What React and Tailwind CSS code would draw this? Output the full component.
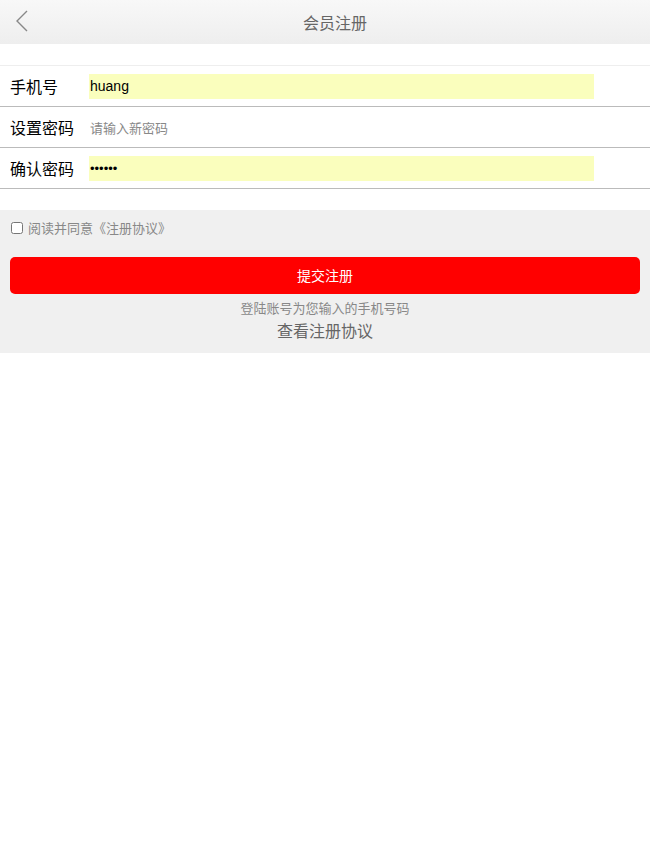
import { useState } from 'react'

const FONT = { fontFamily: '"Microsoft YaHei", "Noto Sans CJK SC", "Liberation Sans", sans-serif' }

export default function App() {
  const [agree, setAgree] = useState(false)

  return (
    <div className="min-h-[843px] bg-white text-black" style={FONT}>
      {/* ── HEADER ── */}
      <header className="relative h-11 flex items-center justify-center pl-5 bg-gradient-to-b from-[#f8f8f8] to-[#eeeeee]">
        <button className="absolute left-[12px] top-[9px] w-5 h-6 flex items-center justify-center">
          <svg width="14" height="22" viewBox="0 0 14 22" fill="none">
            <path d="M12 1 L2 11 L12 21" stroke="#888" strokeWidth="1.4" />
          </svg>
        </button>
        <h1 className="text-[16px] text-[#666]">会员注册</h1>
      </header>

      {/* ── FORM ── */}
      <div className="h-[21px]" />
      <div className="border-t border-[#eee]">
        <div className="h-[41px] flex items-center border-b border-[#bbb]">
          <label className="w-[89px] pl-[10px] text-[16px]">手机号</label>
          <input
            type="text" defaultValue="huang"
            className="w-[505px] h-[25px] bg-[#fafebd] text-[14px] text-black outline-none px-[1px]"
            style={{ fontFamily: '"Liberation Sans", Arial, sans-serif' }}
          />
        </div>
        <div className="h-[41px] flex items-center border-b border-[#bbb]">
          <label className="w-[89px] pl-[10px] text-[16px]">设置密码</label>
          <input
            type="password" placeholder="请输入新密码"
            className="w-[505px] h-[25px] bg-transparent text-[13px] outline-none px-[1px] placeholder-[#888]"
          />
        </div>
        <div className="h-[41px] flex items-center border-b border-[#bbb]">
          <label className="w-[89px] pl-[10px] text-[16px]">确认密码</label>
          <input
            type="password" defaultValue="123456"
            className="w-[505px] h-[25px] bg-[#fafebd] text-[13px] text-black outline-none px-[1px]"
            style={{ fontFamily: '"Liberation Sans", Arial, sans-serif' }}
          />
        </div>
      </div>
      <div className="h-[21px]" />

      {/* ── AGREEMENT + SUBMIT ── */}
      <section className="bg-[#f0f0f0] px-[10px] pt-[11px] pb-[12px]">
        <label className="flex items-center gap-[5px] h-[14px] text-[13px] text-[#888]">
          <input
            type="checkbox" checked={agree} onChange={e => setAgree(e.target.checked)}
            className="w-[12px] h-[12px] m-0 ml-[1px]"
          />
          阅读并同意《注册协议》
        </label>
        <button className="mt-[22px] w-full h-[37px] bg-[#ff0000] rounded-[5px] text-white text-[14px]">
          提交注册
        </button>
        <p className="mt-[5px] text-center text-[13px] leading-[18px] text-[#888]">登陆账号为您输入的手机号码</p>
        <p className="mt-[2px] text-center text-[16px] leading-[22px] text-[#666]">查看注册协议</p>
      </section>
    </div>
  )
}
